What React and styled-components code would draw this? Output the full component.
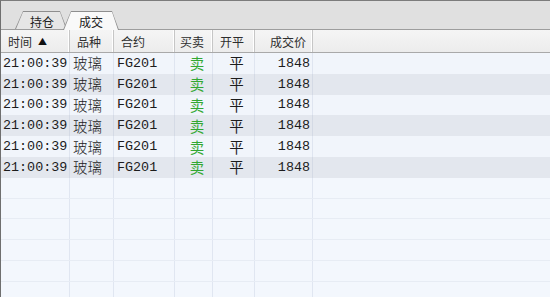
import React from "react";
import styled, { createGlobalStyle } from "styled-components";

const GlobalStyle = createGlobalStyle`
  html, body {
    margin: 0;
    padding: 0;
    background: #f3f7fd;
  }
  * {
    box-sizing: border-box;
  }
`;

const COLS = "69px 44px 61px 38px 42px 58px 1fr";

const Frame = styled.div`
  width: 550px;
  height: 297px;
  overflow: hidden;
  display: flex;
  flex-direction: column;
  border-top: 1px solid #7c7c7c;
  border-left: 1px solid #6f6f6f;
  background: #f3f7fd;
  font-family: "Noto Sans CJK SC", "Liberation Sans", sans-serif;
`;

const TabBar = styled.div`
  height: 29px;
  flex: none;
  display: flex;
  align-items: flex-end;
  padding-left: 14px;
  background: #e0e0e0;
  border-bottom: 1px solid #9d9d9d;
`;

const Tab = styled.div`
  width: ${(p) => (p.$active ? 56 : 52)}px;
  height: ${(p) => (p.$active ? 19 : 18)}px;
  margin-left: ${(p) => (p.$active ? -4 : 0)}px;
  margin-bottom: ${(p) => (p.$active ? -1 : 0)}px;
  padding: 1px 1px 0 1px;
  display: flex;
  background: #8e8e8e;
  clip-path: polygon(8px 0, calc(100% - 7px) 0, 100% 100%, 0 100%);
  position: relative;
  z-index: ${(p) => (p.$active ? 2 : 1)};
`;

const TabFace = styled.div`
  flex: 1;
  display: flex;
  align-items: center;
  justify-content: center;
  padding: 1px 0 0 ${(p) => (p.$active ? 0 : 2)}px;
  font-size: 12px;
  color: #222;
  background: ${(p) => (p.$active ? "#f9f9f9" : "#e6e6e6")};
  clip-path: polygon(7px 0, calc(100% - 6px) 0, 100% 100%, 0 100%);
`;

const Row = styled.div`
  display: grid;
  grid-template-columns: ${COLS};
  flex: none;
`;

const HeaderRow = styled(Row)`
  height: 23px;
  background: linear-gradient(#f5f5f5, #ececec);
  border-bottom: 1px solid #a9a9a9;
`;

const HeaderCell = styled.div`
  display: flex;
  align-items: center;
  justify-content: ${(p) => (p.$right ? "flex-end" : "flex-start")};
  padding: 0 ${(p) => (p.$right ? 6 : 0)}px 0 ${(p) => p.$pad ?? 6}px;
  font-size: 12px;
  color: #2e2e2e;
  border-right: ${(p) => (p.$last ? "none" : "1px solid #c6c6c6")};
  box-shadow: ${(p) => (p.$last ? "none" : "inset -2px 0 0 -1px #fff")};
  white-space: nowrap;
`;

const Arrow = styled.span`
  font-size: 9px;
  margin-left: 6px;
  color: #111;
`;

const DataRow = styled(Row)`
  height: 20.8px;
  background: ${(p) => (p.$alt ? "#e3e7ee" : "#f1f5fb")};
`;

const EmptyRow = styled(Row)`
  height: 20.8px;
  background: #f3f7fd;
  border-bottom: 1px solid #e7ecf4;
`;

const Cell = styled.div`
  display: flex;
  align-items: center;
  justify-content: ${(p) =>
    p.$align === "right" ? "flex-end" : p.$align === "center" ? "center" : "flex-start"};
  padding: 0 ${(p) => (p.$align === "right" ? 2 : 0)}px ${(p) => (p.$cjk ? 1 : 0)}px
    ${(p) => p.$pad ?? 2}px;
  border-right: ${(p) => (p.$last ? "none" : "1px solid rgba(160, 175, 200, 0.22)")};
  color: ${(p) => p.$color || "#1c1c1c"};
  font-family: ${(p) =>
    p.$cjk
      ? '"Noto Sans CJK SC", sans-serif'
      : '"Liberation Mono", "Noto Sans CJK SC", monospace'};
  font-size: ${(p) => (p.$cjk ? "14.5px" : "13.4px")};
  font-weight: ${(p) => (p.$cjk && !p.$mark ? 300 : 400)};
  white-space: nowrap;
  overflow: hidden;
`;

const trades = Array.from({ length: 6 }, () => ({
  time: "21:00:39",
  name: "玻璃",
  code: "FG201",
  side: "卖",
  flag: "平",
  price: "1848",
}));

export default function App() {
  return (
    <>
      <GlobalStyle />
      <Frame>
        <TabBar>
          <Tab>
            <TabFace>持仓</TabFace>
          </Tab>
          <Tab $active>
            <TabFace $active>成交</TabFace>
          </Tab>
        </TabBar>
        <HeaderRow>
          <HeaderCell $pad={7}>
            时间<Arrow>▲</Arrow>
          </HeaderCell>
          <HeaderCell $pad={7}>品种</HeaderCell>
          <HeaderCell $pad={7}>合约</HeaderCell>
          <HeaderCell $pad={5}>买卖</HeaderCell>
          <HeaderCell $pad={7}>开平</HeaderCell>
          <HeaderCell $right $pad={0}>成交价</HeaderCell>
          <HeaderCell $last />
        </HeaderRow>
        {trades.map((t, i) => (
          <DataRow key={i} $alt={i % 2 === 1}>
            <Cell>{t.time}</Cell>
            <Cell $cjk $pad={3}>{t.name}</Cell>
            <Cell $pad={3}>{t.code}</Cell>
            <Cell $cjk $mark $align="center" $pad={7} $color="#32a832">{t.side}</Cell>
            <Cell $cjk $mark $align="center" $pad={6}>{t.flag}</Cell>
            <Cell $align="right">{t.price}</Cell>
            <Cell $last />
          </DataRow>
        ))}
        {Array.from({ length: 6 }, (_, i) => (
          <EmptyRow key={i}>
            <Cell />
            <Cell />
            <Cell />
            <Cell />
            <Cell />
            <Cell />
            <Cell $last />
          </EmptyRow>
        ))}
      </Frame>
    </>
  );
}
